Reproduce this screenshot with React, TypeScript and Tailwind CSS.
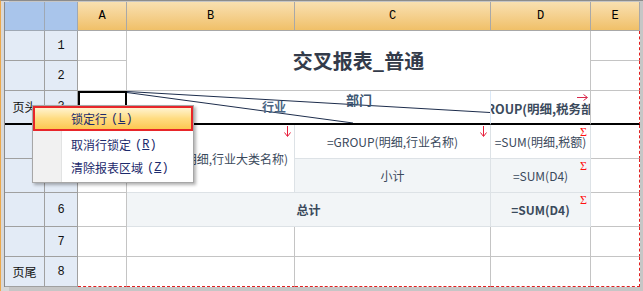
import React from 'react';

const cjk = "font-['Noto_Sans_CJK_SC','Noto_Sans',sans-serif]";
const mono = "font-['Liberation_Mono','DejaVu_Sans_Mono',monospace]";

const headCell = `flex items-center justify-center border-r border-b border-[#a8a8a8] bg-linear-to-b from-[#f9e0b0] to-[#f0c068] text-[12px] text-black ${mono}`;
const cornerCell = 'border-r border-b border-[#9fa8b4] bg-[#a9c5eb]';
const rowHead = `flex items-center justify-center border-r border-b border-[#a0a0a0] bg-[#e3ebf6] text-[12px] text-[#111]`;
const cell = `relative flex items-center justify-center border-r border-b border-[#c4c4c4] bg-white text-[12px] text-[#3b4a5c] ${cjk}`;
const soft = `relative flex items-center justify-center border-r border-b border-[#dde2e6] text-[12px] text-[#3b4a5c] ${cjk}`;
const edge = 'border-r-[#e02020] [border-right-style:dashed]';
const foot = 'border-b-[#e02020] [border-bottom-style:dashed]';

const Sigma = () => (
  <span className="absolute top-[1px] right-[3px] text-[12px] leading-none font-normal text-[#ff1010] font-['Liberation_Serif',serif]">Σ</span>
);

const DownArrow = () => (
  <svg className="absolute top-[1px] right-[3px]" width="7" height="11" viewBox="0 0 7 11">
    <line x1="3.5" y1="0" x2="3.5" y2="10" stroke="#e8203c" strokeWidth="1" />
    <path d="M0.5 6.5 L3.5 10.5 L6.5 6.5" fill="none" stroke="#e8203c" strokeWidth="1" />
  </svg>
);

const RightArrow = () => (
  <svg className="absolute top-[3px] right-[2px]" width="11" height="7" viewBox="0 0 11 7">
    <line x1="0" y1="3.5" x2="10" y2="3.5" stroke="#d8284c" strokeWidth="1" />
    <path d="M6.5 0.5 L10.5 3.5 L6.5 6.5" fill="none" stroke="#d8284c" strokeWidth="1" />
  </svg>
);

const MenuItem: React.FC<{ text: string; hot: string; active?: boolean; cls: string }> = ({ text, hot, active, cls }) => (
  <div
    className={`flex items-center pl-[36px] text-[12px] text-[#1c2a6c] ${cjk} ${cls} ${
      active ? 'border-2 border-[#e8262a] bg-linear-to-b from-[#fff3cf] via-[#ffdc80] to-[#fcc850]' : 'border-2 border-transparent'
    }`}
  >
    <span>{text}</span>
    <span className={`ml-[4px] ${mono}`}>
      (<span className="underline">{hot}</span>)
    </span>
  </div>
);

export default function App() {
  return (
    <div className="relative w-[643px] h-[291px] overflow-hidden bg-[#c6c6c6] border-l border-l-[#eda84a] border-t border-t-[#8c8c8c]">
      <div className="h-full bg-[#d8d8d8] w-[8px] absolute left-0 top-0" />
      <div className="relative ml-[3px] mt-[1px] w-[636px] border-l border-[#8a8a8a] grid grid-cols-[40px_33px_49px_168px_196px_100px_49px] grid-rows-[29px_30px_30px_34px_34px_34px_34px_30px_30px]">
        {/* header */}
        <div className={cornerCell} />
        <div className={cornerCell} />
        <div className={headCell}>A</div>
        <div className={headCell}>B</div>
        <div className={headCell}>C</div>
        <div className={headCell}>D</div>
        <div className={headCell}>E</div>

        {/* row 1 */}
        <div className={rowHead} />
        <div className={`${rowHead} ${mono}`}>1</div>
        <div className={cell} />
        <div className={`${cell} col-span-3 row-span-2 text-[20px] font-bold text-[#333b4a]`}>交叉报表_普通</div>
        <div className={`${cell} ${edge}`} />

        {/* row 2 */}
        <div className={rowHead} />
        <div className={`${rowHead} ${mono}`}>2</div>
        <div className={cell} />
        <div className={`${cell} ${edge}`} />

        {/* row 3 */}
        <div className={`${rowHead} bg-[#b9d4f4] border-b-2 border-b-black ${cjk}`}>页头</div>
        <div className={`${rowHead} bg-[#b9d4f4] border-b-2 border-b-black ${mono}`}>3</div>
        <div className="border-2 border-black bg-white" />
        <div className={`${cell} col-span-2 bg-[#c2dcf8] border-r-[#dbe9f8] border-b-2 border-b-black overflow-hidden`}>
          <svg className="absolute left-0 top-0" width="363" height="32" viewBox="0 0 363 32">
            <line x1="0" y1="0.5" x2="363" y2="21.5" stroke="#1d2d4c" strokeWidth="1" />
            <line x1="0" y1="1.5" x2="226" y2="32" stroke="#1d2d4c" strokeWidth="1" />
          </svg>
          <span className="absolute left-[219px] top-[-1px] text-[13px] font-bold text-[#3d5672]">部门</span>
          <span className="absolute left-[135px] top-[7px] text-[12px] font-bold text-[#4b6684]">行业</span>
        </div>
        <div className={`${cell} bg-[#c2dcf8] border-b-2 border-b-black overflow-hidden pt-[5px]`}>
          <span className="shrink-0 whitespace-nowrap font-bold text-[12.5px]">=GROUP(明细,税务部门)</span>
          <RightArrow />
        </div>
        <div className={`${cell} bg-[#c2dcf8] border-b-2 border-b-black ${edge}`} />

        {/* row 4 */}
        <div className={rowHead} />
        <div className={`${rowHead} ${mono}`}>4</div>
        <div className={cell} />
        <div className={`${soft} row-span-2 bg-white overflow-hidden`}>
          <span className="shrink-0 whitespace-nowrap">=GROUP(明细,行业大类名称)</span>
          <DownArrow />
        </div>
        <div className={`${soft} bg-white`}>
          <span className="whitespace-nowrap">=GROUP(明细,行业名称)</span>
          <DownArrow />
        </div>
        <div className={`${soft} bg-white overflow-hidden`}>
          <span className="shrink-0 whitespace-nowrap">=SUM(明细,税额)</span>
          <Sigma />
        </div>
        <div className={`${cell} ${edge}`} />

        {/* row 5 */}
        <div className={rowHead} />
        <div className={`${rowHead} ${mono}`}>5</div>
        <div className={cell} />
        <div className={`${soft} bg-[#f2f5f7]`}>小计</div>
        <div className={`${soft} bg-[#f2f5f7]`}>
          =SUM(D4)
          <Sigma />
        </div>
        <div className={`${cell} ${edge}`} />

        {/* row 6 */}
        <div className={rowHead} />
        <div className={`${rowHead} ${mono}`}>6</div>
        <div className={cell} />
        <div className={`${soft} col-span-2 bg-[#f2f5f7] font-bold`}>总计</div>
        <div className={`${soft} bg-[#f2f5f7] font-bold`}>
          =SUM(D4)
          <Sigma />
        </div>
        <div className={`${cell} ${edge}`} />

        {/* row 7 */}
        <div className={rowHead} />
        <div className={`${rowHead} ${mono}`}>7</div>
        <div className={cell} />
        <div className={cell} />
        <div className={cell} />
        <div className={cell} />
        <div className={`${cell} ${edge}`} />

        {/* row 8 */}
        <div className={`${rowHead} ${cjk}`}>页尾</div>
        <div className={`${rowHead} ${mono}`}>8</div>
        <div className={`${cell} ${foot}`} />
        <div className={`${cell} ${foot}`} />
        <div className={`${cell} ${foot}`} />
        <div className={`${cell} ${foot}`} />
        <div className={`${cell} ${foot} ${edge}`} />
      </div>

      {/* context menu */}
      <div className="absolute left-[31px] top-[104px] w-[162px] h-[78px] flex flex-col border border-[#a7a7a7] bg-[linear-gradient(to_right,#f1f1f1_28px,#e2e3e3_28px,#e2e3e3_29px,#ffffff_29px)] shadow-[2px_2px_3px_rgba(0,0,0,0.3)]">
        <MenuItem text="锁定行" hot="L" active cls="h-[25px]" />
        <MenuItem text="取消行锁定" hot="R" cls="h-[26px] mt-[1px]" />
        <MenuItem text="清除报表区域" hot="Z" cls="h-[20px]" />
      </div>
    </div>
  );
}
